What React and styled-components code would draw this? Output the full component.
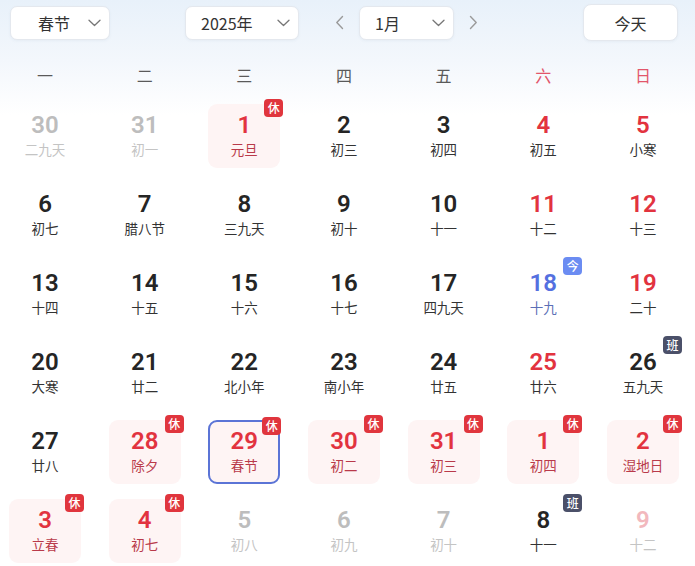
import styled, { createGlobalStyle, css } from "styled-components";

const GlobalStyle = createGlobalStyle`
  html, body {
    margin: 0;
    padding: 0;
  }
  body {
    background: linear-gradient(180deg, #e8f1fa 0px, #f3f7fc 60px, #ffffff 115px);
    font-family: "Noto Sans CJK SC", "Noto Sans", sans-serif;
    width: 695px;
    height: 566px;
    overflow: hidden;
  }
`;

const weekdays = ["一", "二", "三", "四", "五", "六", "日"];

const days = [
  { n: 30, l: "二九天", gray: true },
  { n: 31, l: "初一", gray: true },
  { n: 1, l: "元旦", rest: true },
  { n: 2, l: "初三" },
  { n: 3, l: "初四" },
  { n: 4, l: "初五", red: true },
  { n: 5, l: "小寒", red: true },

  { n: 6, l: "初七" },
  { n: 7, l: "腊八节" },
  { n: 8, l: "三九天" },
  { n: 9, l: "初十" },
  { n: 10, l: "十一" },
  { n: 11, l: "十二", red: true },
  { n: 12, l: "十三", red: true },

  { n: 13, l: "十四" },
  { n: 14, l: "十五" },
  { n: 15, l: "十六" },
  { n: 16, l: "十七" },
  { n: 17, l: "四九天" },
  { n: 18, l: "十九", today: true },
  { n: 19, l: "二十", red: true },

  { n: 20, l: "大寒" },
  { n: 21, l: "廿二" },
  { n: 22, l: "北小年" },
  { n: 23, l: "南小年" },
  { n: 24, l: "廿五" },
  { n: 25, l: "廿六", red: true },
  { n: 26, l: "五九天", work: true },

  { n: 27, l: "廿八" },
  { n: 28, l: "除夕", rest: true },
  { n: 29, l: "春节", rest: true, selected: true },
  { n: 30, l: "初二", rest: true },
  { n: 31, l: "初三", rest: true },
  { n: 1, l: "初四", rest: true },
  { n: 2, l: "湿地日", rest: true },

  { n: 3, l: "立春", rest: true },
  { n: 4, l: "初七", rest: true },
  { n: 5, l: "初八", gray: true },
  { n: 6, l: "初九", gray: true },
  { n: 7, l: "初十", gray: true },
  { n: 8, l: "十一", work: true },
  { n: 9, l: "十二", gray: true, faintRed: true },
];

function Chevron() {
  return (
    <svg width="13" height="8" viewBox="0 0 13 8" fill="none">
      <path d="M1 1.2 L6.5 6.5 L12 1.2" stroke="#777" strokeWidth="1.3" strokeLinecap="round" strokeLinejoin="round" />
    </svg>
  );
}

function Arrow({ dir }) {
  return (
    <svg width="9" height="15" viewBox="0 0 9 15" fill="none">
      <path
        d={dir === "left" ? "M7.5 1.5 L1.8 7.5 L7.5 13.5" : "M1.5 1.5 L7.2 7.5 L1.5 13.5"}
        stroke="#9a9a9a"
        strokeWidth="1.4"
        strokeLinecap="round"
        strokeLinejoin="round"
      />
    </svg>
  );
}

function Day({ d }) {
  return (
    <Cell rest={d.rest} selected={d.selected}>
      <Num $gray={d.gray} $red={d.red || d.rest} $today={d.today} $faint={d.faintRed}>
        {d.n}
      </Num>
      <Lunar $gray={d.gray} $rest={d.rest} $today={d.today}>
        {d.l}
      </Lunar>
      {d.rest && <Badge color="#e0353d">休</Badge>}
      {d.work && <Badge color="#4b5069">班</Badge>}
      {d.today && <Badge color="#6b8cf2">今</Badge>}
    </Cell>
  );
}

export default function App() {
  return (
    <>
      <GlobalStyle />
      <Page>
        <Toolbar>
          <Select width={100} pad={27} offset={10}>
            <span>春节</span>
            <Chevron />
          </Select>
          <Select width={114} pad={15} offset={75}>
            <span>2025年</span>
            <Chevron />
          </Select>
          <ArrowBtn offset={33}>
            <Arrow dir="left" />
          </ArrowBtn>
          <Select width={95} pad={15} offset={13}>
            <span>1月</span>
            <Chevron />
          </Select>
          <ArrowBtn offset={12}>
            <Arrow dir="right" />
          </ArrowBtn>
          <Spacer />
          <TodayButton>今天</TodayButton>
        </Toolbar>

        <WeekHeader>
          {weekdays.map((w, i) => (
            <WeekDay key={w} weekend={i >= 5}>
              {w}
            </WeekDay>
          ))}
        </WeekHeader>

        <Grid>
          {days.map((d, i) => (
            <Day key={i} d={d} />
          ))}
        </Grid>
      </Page>
    </>
  );
}

const Page = styled.div`
  width: 695px;
  height: 566px;
  display: flex;
  flex-direction: column;
`;

const Toolbar = styled.div`
  display: flex;
  align-items: center;
  height: 35px;
  margin-top: 5px;
  padding-right: 17px;
`;

const Select = styled.div`
  width: ${(p) => p.width}px;
  height: 34px;
  box-sizing: border-box;
  margin-left: ${(p) => p.offset}px;
  padding: 0 8px 0 ${(p) => p.pad}px;
  display: flex;
  align-items: center;
  justify-content: space-between;
  background: #ffffff;
  border: 1px solid #e4e8ee;
  border-radius: 7px;
  box-shadow: 0 1px 3px rgba(40, 70, 120, 0.05);
  font-size: 16px;
  color: #333;
`;

const ArrowBtn = styled.div`
  margin-left: ${(p) => p.offset}px;
  width: 14px;
  height: 20px;
  display: flex;
  align-items: center;
  justify-content: center;
`;

const Spacer = styled.div`
  flex: 1;
`;

const TodayButton = styled.div`
  width: 95px;
  height: 37px;
  box-sizing: border-box;
  display: flex;
  align-items: center;
  justify-content: center;
  background: #ffffff;
  border: 1px solid #e4e8ee;
  border-radius: 8px;
  box-shadow: 0 1px 3px rgba(40, 70, 120, 0.05);
  font-size: 16px;
  color: #333;
`;

const columns = css`
  display: grid;
  grid-template-columns: repeat(7, 72px);
  column-gap: 27.67px;
  padding-left: 9px;
`;

const WeekHeader = styled.div`
  ${columns};
  margin-top: 20px;
  height: 30px;
`;

const WeekDay = styled.div`
  display: flex;
  align-items: center;
  justify-content: center;
  font-size: 16px;
  color: ${(p) => (p.weekend ? "#e2566b" : "#5a5a5a")};
`;

const Grid = styled.div`
  ${columns};
  margin-top: 14px;
  grid-auto-rows: 64px;
  row-gap: 15px;
`;

const Cell = styled.div`
  position: relative;
  box-sizing: border-box;
  display: flex;
  flex-direction: column;
  align-items: center;
  padding-top: ${(p) => (p.selected ? 6 : 8)}px;
  border-radius: 9px;
  background: ${(p) => (p.rest ? "#fef4f4" : "transparent")};
  border: ${(p) => (p.selected ? "2px solid #5b74d6" : "none")};
`;

const Num = styled.div`
  font-family: Roboto, "Liberation Sans", sans-serif;
  font-weight: 600;
  font-size: 24px;
  line-height: 26px;
  color: ${(p) =>
    p.$faint
      ? "#f2b8bd"
      : p.$gray
      ? "#bdbdbd"
      : p.$today
      ? "#5470e0"
      : p.$red
      ? "#e2333f"
      : "#252525"};
`;

const Lunar = styled.div`
  margin-top: 2px;
  font-size: 13.5px;
  line-height: 18px;
  color: ${(p) =>
    p.$gray ? "#c4c4c4" : p.$today ? "#5b6fb6" : p.$rest ? "#b93a4a" : "#333"};
`;

const Badge = styled.div`
  position: absolute;
  top: -5px;
  right: -3px;
  width: 19px;
  height: 18px;
  border-radius: 4px;
  background: ${(p) => p.color};
  color: #fff;
  font-size: 12px;
  font-weight: 500;
  line-height: 18px;
  text-align: center;
`;
